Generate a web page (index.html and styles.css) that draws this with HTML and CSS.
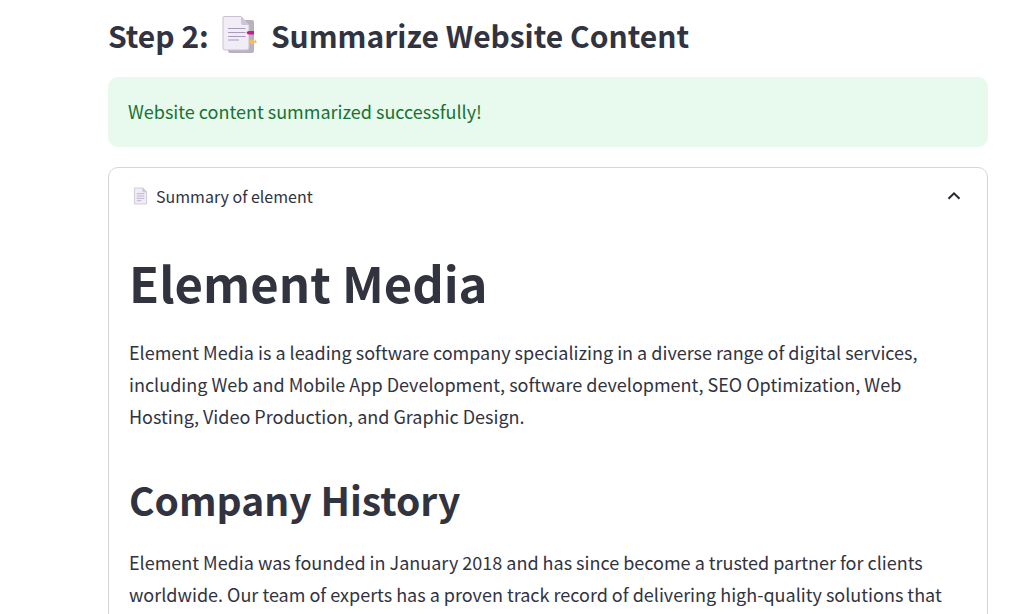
FILE: index.html
```html
<!DOCTYPE html>
<html lang="en">
<head>
<meta charset="utf-8">
<meta name="viewport" content="width=device-width, initial-scale=1">
<title>Summarize Website Content</title>
<link rel="stylesheet" href="styles.css">
</head>
<body>
<main class="page">
  <h3 class="step">
    <span>Step 2:</span>
    <svg class="step-icon" viewBox="0 0 36 40" aria-hidden="true">
      <path d="M7 5H31Q33 5 33 7V36Q33 38 31 38H9Q7 38 7 36Z" fill="#bbb1bd"/>
      <path d="M3 1.500H20L28 10V33Q28 35 26 35H4Q2 35 2 33V3Q2 1.500 3 1.500Z" fill="#f1edf6" stroke="#c9c0cf"/>
      <path d="M20 1.500L28 10H22Q20 10 20 8Z" fill="#cfc6d5"/>
      <path d="M7.500 13.500H24M7.500 17.500H24M7.500 21.500H24M7.500 25H17.500" stroke="#a99bbb" stroke-width="1.100" stroke-linecap="round"/>
      <path d="M33 16H28Q26 16 25.500 17.700Q26 19.500 28 19.500H33Z" fill="#d3148c"/>
      <path d="M30 24.300L34 26V24.300L35.500 26L35.500 28L33 27.800L31 29.500Q28.500 28.500 28.500 26.500Q29 24.500 30 24.300Z" fill="#f8bd55"/>
    </svg>
    <span>Summarize Website Content</span>
  </h3>
  <div class="alert" role="status">Website content summarized successfully!</div>
  <section class="expander">
    <button class="expander-header" type="button" aria-expanded="true" aria-controls="summary">
      <svg class="doc-icon" viewBox="0 0 16 18" aria-hidden="true">
        <path d="M1.500 .5H10.500L14.500 4.500V17.500H1.500Z" fill="#f1edf6" stroke="#cfc7d5"/>
        <path d="M10.500 .5V4.500H14.500" fill="#cfc7d5" stroke="#cfc7d5"/>
        <path d="M4 6.500H12M4 9H12M4 11.500H12M4 14H9" stroke="#afa1c0" stroke-width=".8"/>
      </svg>
      <span class="expander-label">Summary of element</span>
      <svg class="chevron" viewBox="0 0 14 10" aria-hidden="true">
        <path d="M1.500 7.800L7 2.300L12.500 7.800" fill="none" stroke="#262730" stroke-width="2"/>
      </svg>
    </button>
    <div class="expander-body" id="summary">
      <h1 class="title">Element Media</h1>
      <p class="text">Element Media is a leading software company specializing in a diverse range of digital services, including Web and Mobile App Development, software development, SEO Optimization, Web Hosting, Video Production, and Graphic Design.</p>
      <h2 class="subtitle">Company History</h2>
      <p class="text">Element Media was founded in January 2018 and has since become a trusted partner for clients worldwide. Our team of experts has a proven track record of delivering high-quality solutions that</p>
    </div>
  </section>
</main>
</body>
</html>
```
FILE: styles.css
```css
* {
  box-sizing: border-box;
}

body {
  margin: 0;
  background: #fff;
  color: #31333f;
  font-family: "Source Sans Pro", "Noto Sans CJK SC", "Noto Sans", sans-serif;
  font-size: 18px;
  line-height: 32px;
}

.page {
  max-width: 1035px;
  height: 100vh;
  padding: 15px 47px 0 108px;
  overflow: hidden;
}

.step {
  display: flex;
  align-items: center;
  gap: 12px;
  margin: 0 0 22px;
  font-size: 30px;
  line-height: 40px;
  font-weight: 600;
}

.step-icon {
  width: 36px;
  height: 40px;
  margin-right: 2px;
}

.alert {
  margin-bottom: 20px;
  padding: 18px 20px 20px;
  border-radius: 10px;
  background: #e8f9ee;
  color: #177233;
}

.expander {
  border: 1px solid #d6d6d9;
  border-radius: 10px;
}

.expander-header {
  display: flex;
  align-items: center;
  gap: 8px;
  width: 100%;
  padding: 12px 26px 14px 24px;
  border: 0;
  background: none;
  color: inherit;
  font: inherit;
  font-size: 16px;
  text-align: left;
  cursor: pointer;
}

.doc-icon {
  width: 15px;
  height: 18px;
}

.expander-label {
  flex: 1;
}

.chevron {
  width: 14px;
  height: 10px;
}

.expander-body {
  padding: 20px;
}

.title {
  margin: 0;
  padding: 2px 0 20px;
  font-size: 49px;
  line-height: 68px;
  font-weight: 700;
}

.subtitle {
  margin: 0;
  padding: 12px 0 20px;
  font-size: 39px;
  line-height: 54px;
  font-weight: 600;
}

.text {
  margin: 0 0 28px;
}
```
